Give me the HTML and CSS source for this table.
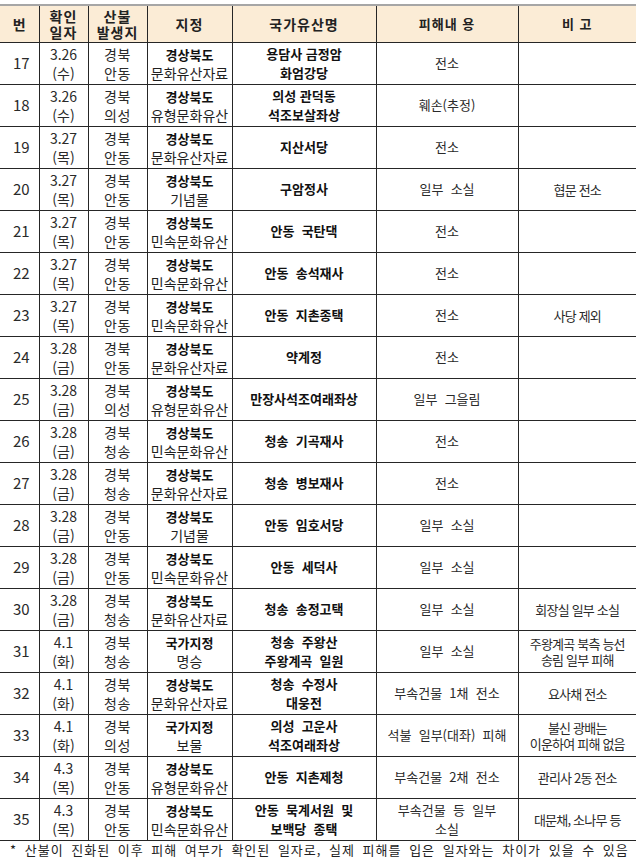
FILE: index.html
```html
<!DOCTYPE html>
<html lang="ko">
<head>
<meta charset="utf-8">
<link rel="stylesheet" href="styles.css">
</head>
<body>
<table class="tbl">
  <colgroup>
    <col class="c1"><col class="c2"><col class="c3"><col class="c4"><col class="c5"><col class="c6"><col class="c7">
  </colgroup>
  <thead>
    <tr>
      <th>번</th>
      <th class="sp">확인<br>일자</th>
      <th class="sp">산불<br>발생지</th>
      <th class="sp">지정</th>
      <th class="sp">국가유산명</th>
      <th class="sp2">피해내 용</th>
      <th class="sp2">비 고</th>
    </tr>
  </thead>
  <tbody>
    <tr><td class="no">17</td><td class="dt">3.26<br>(수)</td><td class="rg">경북<br>안동</td><td class="ds"><b>경상북도</b><br>문화유산자료</td><td class="nm">용담사 금정암<br>화엄강당</td><td class="dm">전소</td><td class="rm"></td></tr>
    <tr><td class="no">18</td><td class="dt">3.26<br>(수)</td><td class="rg">경북<br>의성</td><td class="ds"><b>경상북도</b><br>유형문화유산</td><td class="nm">의성 관덕동<br>석조보살좌상</td><td class="dm">훼손(추정)</td><td class="rm"></td></tr>
    <tr><td class="no">19</td><td class="dt">3.27<br>(목)</td><td class="rg">경북<br>안동</td><td class="ds"><b>경상북도</b><br>문화유산자료</td><td class="nm">지산서당</td><td class="dm">전소</td><td class="rm"></td></tr>
    <tr><td class="no">20</td><td class="dt">3.27<br>(목)</td><td class="rg">경북<br>안동</td><td class="ds"><b>경상북도</b><br>기념물</td><td class="nm">구암정사</td><td class="dm">일부&nbsp; 소실</td><td class="rm">협문 전소</td></tr>
    <tr><td class="no">21</td><td class="dt">3.27<br>(목)</td><td class="rg">경북<br>안동</td><td class="ds"><b>경상북도</b><br>민속문화유산</td><td class="nm">안동&nbsp; 국탄댁</td><td class="dm">전소</td><td class="rm"></td></tr>
    <tr><td class="no">22</td><td class="dt">3.27<br>(목)</td><td class="rg">경북<br>안동</td><td class="ds"><b>경상북도</b><br>민속문화유산</td><td class="nm">안동&nbsp; 송석재사</td><td class="dm">전소</td><td class="rm"></td></tr>
    <tr><td class="no">23</td><td class="dt">3.27<br>(목)</td><td class="rg">경북<br>안동</td><td class="ds"><b>경상북도</b><br>민속문화유산</td><td class="nm">안동&nbsp; 지촌종택</td><td class="dm">전소</td><td class="rm">사당 제외</td></tr>
    <tr><td class="no">24</td><td class="dt">3.28<br>(금)</td><td class="rg">경북<br>안동</td><td class="ds"><b>경상북도</b><br>문화유산자료</td><td class="nm">약계정</td><td class="dm">전소</td><td class="rm"></td></tr>
    <tr><td class="no">25</td><td class="dt">3.28<br>(금)</td><td class="rg">경북<br>의성</td><td class="ds"><b>경상북도</b><br>유형문화유산</td><td class="nm">만장사석조여래좌상</td><td class="dm">일부&nbsp; 그을림</td><td class="rm"></td></tr>
    <tr><td class="no">26</td><td class="dt">3.28<br>(금)</td><td class="rg">경북<br>청송</td><td class="ds"><b>경상북도</b><br>민속문화유산</td><td class="nm">청송&nbsp; 기곡재사</td><td class="dm">전소</td><td class="rm"></td></tr>
    <tr><td class="no">27</td><td class="dt">3.28<br>(금)</td><td class="rg">경북<br>청송</td><td class="ds"><b>경상북도</b><br>문화유산자료</td><td class="nm">청송&nbsp; 병보재사</td><td class="dm">전소</td><td class="rm"></td></tr>
    <tr><td class="no">28</td><td class="dt">3.28<br>(금)</td><td class="rg">경북<br>안동</td><td class="ds"><b>경상북도</b><br>기념물</td><td class="nm">안동&nbsp; 임호서당</td><td class="dm">일부&nbsp; 소실</td><td class="rm"></td></tr>
    <tr><td class="no">29</td><td class="dt">3.28<br>(금)</td><td class="rg">경북<br>안동</td><td class="ds"><b>경상북도</b><br>민속문화유산</td><td class="nm">안동&nbsp; 세덕사</td><td class="dm">일부&nbsp; 소실</td><td class="rm"></td></tr>
    <tr><td class="no">30</td><td class="dt">3.28<br>(금)</td><td class="rg">경북<br>청송</td><td class="ds"><b>경상북도</b><br>문화유산자료</td><td class="nm">청송&nbsp; 송정고택</td><td class="dm">일부&nbsp; 소실</td><td class="rm">회장실 일부 소실</td></tr>
    <tr><td class="no">31</td><td class="dt">4.1<br>(화)</td><td class="rg">경북<br>청송</td><td class="ds"><b>국가지정</b><br>명승</td><td class="nm">청송&nbsp; 주왕산<br>주왕계곡&nbsp; 일원</td><td class="dm">일부&nbsp; 소실</td><td class="rm">주왕계곡 북측 능선<br>송림 일부 피해</td></tr>
    <tr><td class="no">32</td><td class="dt">4.1<br>(화)</td><td class="rg">경북<br>청송</td><td class="ds"><b>경상북도</b><br>문화유산자료</td><td class="nm">청송&nbsp; 수정사<br>대웅전</td><td class="dm">부속건물&nbsp; 1채&nbsp; 전소</td><td class="rm">요사채 전소</td></tr>
    <tr><td class="no">33</td><td class="dt">4.1<br>(화)</td><td class="rg">경북<br>의성</td><td class="ds"><b>국가지정</b><br>보물</td><td class="nm">의성&nbsp; 고운사<br>석조여래좌상</td><td class="dm">석불&nbsp; 일부(대좌)&nbsp; 피해</td><td class="rm">불신 광배는<br>이운하여 피해 없음</td></tr>
    <tr><td class="no">34</td><td class="dt">4.3<br>(목)</td><td class="rg">경북<br>안동</td><td class="ds"><b>경상북도</b><br>유형문화유산</td><td class="nm">안동&nbsp; 지촌제청</td><td class="dm">부속건물&nbsp; 2채&nbsp; 전소</td><td class="rm">관리사 2동 전소</td></tr>
    <tr><td class="no">35</td><td class="dt">4.3<br>(목)</td><td class="rg">경북<br>안동</td><td class="ds"><b>경상북도</b><br>민속문화유산</td><td class="nm">안동&nbsp; 묵계서원&nbsp; 및<br>보백당&nbsp; 종택</td><td class="dm">부속건물&nbsp; 등&nbsp; 일부<br>소실</td><td class="rm">대문채, 소나무 등</td></tr>
  </tbody>
</table>
<p class="note">* 산불이 진화된 이후 피해 여부가 확인된 일자로, 실제 피해를 입은 일자와는 차이가 있을 수 있음</p>
</body>
</html>
```

FILE: styles.css
```css
html, body {
  margin: 0;
  padding: 0;
  background: #ffffff;
}

body {
  font-family: "Noto Sans CJK KR", "Noto Sans", sans-serif;
  color: #1f1f1f;
}

.tbl {
  margin-top: 4px;
  width: 636px;
  table-layout: fixed;
  border-collapse: collapse;
  border-top: 2px solid #a6a6a6;
}

.c1 { width: 39px; }
.c2 { width: 49px; }
.c3 { width: 59px; }
.c4 { width: 85px; }
.c5 { width: 144px; }
.c6 { width: 142px; }
.c7 { width: 118px; }

.tbl th,
.tbl td {
  border: 1px solid #262626;
  padding: 0;
  text-align: center;
  vertical-align: middle;
  white-space: nowrap;
  overflow: hidden;
}

.tbl th:first-child,
.tbl td:first-child {
  border-left: none;
}

.tbl th:last-child,
.tbl td:last-child {
  border-right: none;
}

.tbl thead th {
  background: #fbecd6;
  height: 36px;
  font-size: 14px;
  line-height: 16px;
  font-weight: 700;
  color: #222;
  border-top: none;
}

.tbl thead th.sp {
  letter-spacing: 1px;
}

.tbl thead th.sp2 {
  letter-spacing: 1px;
  font-size: 13px;
}

.tbl tbody td {
  height: 41px;
  font-size: 14px;
  line-height: 18.5px;
}

.no {
  padding-left: 4px !important;
  font-size: 15px !important;
  color: #2a2a2a;
}

.dt {
  font-size: 14px;
  color: #2a2a2a;
}

.rg {
  color: #2a2a2a;
  letter-spacing: 0.5px;
}

.ds b {
  font-size: 13px;
  font-weight: 700;
  color: #111;
}

.nm {
  font-size: 13px !important;
  font-weight: 700;
  color: #111;
}

.dm {
  font-size: 13px !important;
  color: #2a2a2a;
}

.rm {
  font-size: 13px !important;
  letter-spacing: -0.8px;
  line-height: 16px !important;
  color: #2a2a2a;
}

.note {
  margin: 1px 0 0 10px;
  font-size: 13px;
  line-height: 16px;
  letter-spacing: 1px;
  word-spacing: 3px;
  white-space: nowrap;
  color: #222;
}
```
